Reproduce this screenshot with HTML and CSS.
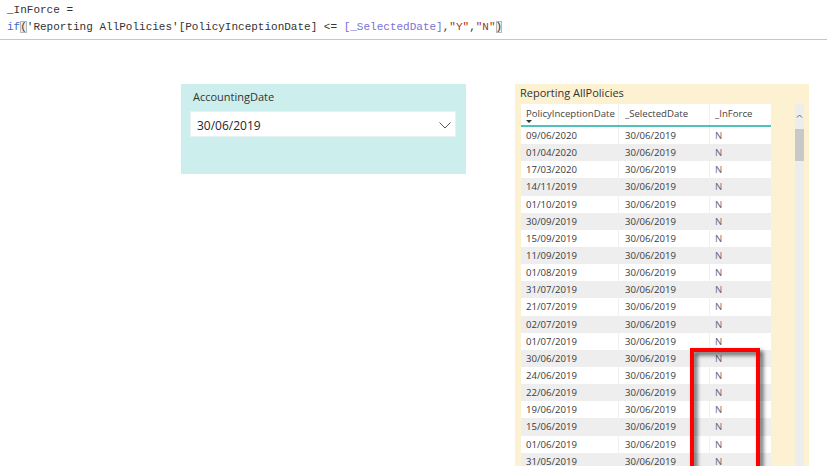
FILE: index.html
```html
<!DOCTYPE html>
<html>
<head>
<meta charset="utf-8">
<link rel="stylesheet" href="styles.css">
</head>
<body>
<div class="formula">
  <div class="fline">_InForce =</div>
  <div class="fline"><span class="kw">if</span><span class="paren">(</span>'Reporting AllPolicies'[PolicyInceptionDate] &lt;= <span class="meas">[_SelectedDate]</span>,<span class="str">"Y"</span>,<span class="str">"N"</span><span class="paren">)</span></div>
</div>
<div class="canvas">
  <div class="slicer">
    <div class="slicer-title">AccountingDate</div>
    <div class="dropdown">
      <span class="dd-value">30/06/2019</span>
      <svg class="chev" width="12" height="7" viewBox="0 0 12 7"><path d="M0.5 0.5 L6 6 L11.5 0.5" fill="none" stroke="#555" stroke-width="1"/></svg>
    </div>
  </div>
  <div class="visual">
    <div class="vtitle">Reporting AllPolicies</div>
    <div class="vbody">
      <div class="grid">
        <div class="hrow">
          <div class="hcell c1">PolicyInceptionDate<span class="sort"></span></div>
          <div class="hcell c2">_SelectedDate</div>
          <div class="hcell c3">_InForce</div>
        </div>
        <div class="row"><div class="cell c1">09/06/2020</div><div class="cell c2">30/06/2019</div><div class="cell c3">N</div></div>
        <div class="row"><div class="cell c1">01/04/2020</div><div class="cell c2">30/06/2019</div><div class="cell c3">N</div></div>
        <div class="row"><div class="cell c1">17/03/2020</div><div class="cell c2">30/06/2019</div><div class="cell c3">N</div></div>
        <div class="row"><div class="cell c1">14/11/2019</div><div class="cell c2">30/06/2019</div><div class="cell c3">N</div></div>
        <div class="row"><div class="cell c1">01/10/2019</div><div class="cell c2">30/06/2019</div><div class="cell c3">N</div></div>
        <div class="row"><div class="cell c1">30/09/2019</div><div class="cell c2">30/06/2019</div><div class="cell c3">N</div></div>
        <div class="row"><div class="cell c1">15/09/2019</div><div class="cell c2">30/06/2019</div><div class="cell c3">N</div></div>
        <div class="row"><div class="cell c1">11/09/2019</div><div class="cell c2">30/06/2019</div><div class="cell c3">N</div></div>
        <div class="row"><div class="cell c1">01/08/2019</div><div class="cell c2">30/06/2019</div><div class="cell c3">N</div></div>
        <div class="row"><div class="cell c1">31/07/2019</div><div class="cell c2">30/06/2019</div><div class="cell c3">N</div></div>
        <div class="row"><div class="cell c1">21/07/2019</div><div class="cell c2">30/06/2019</div><div class="cell c3">N</div></div>
        <div class="row"><div class="cell c1">02/07/2019</div><div class="cell c2">30/06/2019</div><div class="cell c3">N</div></div>
        <div class="row"><div class="cell c1">01/07/2019</div><div class="cell c2">30/06/2019</div><div class="cell c3">N</div></div>
        <div class="row"><div class="cell c1">30/06/2019</div><div class="cell c2">30/06/2019</div><div class="cell c3">N</div></div>
        <div class="row"><div class="cell c1">24/06/2019</div><div class="cell c2">30/06/2019</div><div class="cell c3">N</div></div>
        <div class="row"><div class="cell c1">22/06/2019</div><div class="cell c2">30/06/2019</div><div class="cell c3">N</div></div>
        <div class="row"><div class="cell c1">19/06/2019</div><div class="cell c2">30/06/2019</div><div class="cell c3">N</div></div>
        <div class="row"><div class="cell c1">15/06/2019</div><div class="cell c2">30/06/2019</div><div class="cell c3">N</div></div>
        <div class="row"><div class="cell c1">01/06/2019</div><div class="cell c2">30/06/2019</div><div class="cell c3">N</div></div>
        <div class="row"><div class="cell c1">31/05/2019</div><div class="cell c2">30/06/2019</div><div class="cell c3">N</div></div>
      </div>
      <div class="scrollbar">
        <svg class="sb-arrow" width="9" height="8" viewBox="0 0 9 8"><path d="M2 5.5 L4.5 3 L7 5.5" fill="none" stroke="#666" stroke-width="1"/></svg>
        <div class="sb-thumb"></div>
      </div>
    </div>
    <div class="highlight"></div>
  </div>
</div>
</body>
</html>
```

FILE: styles.css
```css
html, body {
  margin: 0;
  padding: 0;
  background: #ffffff;
  height: 466px;
  overflow: hidden;
}

.formula {
  height: 37px;
  padding: 2px 0 0 7px;
  border-bottom: 1px solid #c6c6c6;
  font-family: "Liberation Mono", "DejaVu Sans Mono", monospace;
  font-size: 11px;
  color: #333333;
  box-sizing: content-box;
}

.fline {
  height: 17px;
  line-height: 17px;
  white-space: pre;
}

.kw { color: #3b6ccc; }
.meas { color: #7b6fd6; }
.str { color: #a3321f; }
.paren {
  background: #ececec;
  outline: 1px solid #b8b8b8;
  outline-offset: -1px;
}

.canvas {
  display: flex;
  align-items: flex-start;
  padding: 44px 0 0 181px;
  gap: 49px;
  font-family: "Open Sans", "Noto Sans", sans-serif;
}

.slicer {
  width: 285px;
  height: 90px;
  box-sizing: border-box;
  background: #ccefed;
  padding: 6px 9px;
}

.slicer-title {
  margin: 0 0 7px 3px;
  height: 14px;
  line-height: 14px;
  font-size: 11px;
  color: #333333;
}

.dropdown {
  width: 266px;
  height: 26px;
  box-sizing: border-box;
  background: #ffffff;
  border: 1px solid #e9f2f2;
  display: flex;
  align-items: center;
  justify-content: space-between;
  padding: 2px 4px 0 6px;
}

.dd-value {
  font-size: 12px;
  color: #252525;
}

.chev { display: block; margin-top: 0; }

.visual {
  position: relative;
  width: 294px;
  height: 400px;
  background: #fcf2d2;
  overflow: hidden;
}

.vtitle {
  height: 20px;
  padding: 1px 0 0 5px;
  box-sizing: border-box;
  font-size: 11px;
  line-height: 15px;
  color: #333333;
}

.vbody {
  display: flex;
  padding-left: 6px;
  gap: 24px;
}

.grid {
  width: 250px;
  font-size: 9.6px;
  color: #3a3a3a;
}

.hrow {
  display: flex;
  height: 21px;
  background: #ffffff;
  border-bottom: 2px solid #4fc3ba;
}

.hcell {
  position: relative;
  box-sizing: border-box;
  padding-top: 3px;
  line-height: 13px;
  color: #444444;
  border-right: 1px solid #f2f2f2;
}

.sort {
  position: absolute;
  left: 5px;
  top: 16px;
  width: 0;
  height: 0;
  border-left: 3px solid transparent;
  border-right: 3px solid transparent;
  border-top: 3px solid #333333;
}

.row {
  display: flex;
  height: 17.15px;
  line-height: 17.15px;
  background: #ffffff;
}

.row:nth-child(odd) {
  background: #eeeeee;
}

.cell {
  box-sizing: border-box;
  border-right: 1px solid #f0f0f0;
  white-space: nowrap;
}

.c1 { width: 98px; padding-left: 5px; }
.c2 { width: 91px; padding-left: 6px; }
.c3 { width: 61px; padding-left: 5px; border-right: none; }
.cell.c3 { color: #666677; }

.scrollbar {
  width: 9px;
  height: 380px;
  background: #ededed;
  display: flex;
  flex-direction: column;
  padding-top: 8px;
}

.sb-arrow { display: block; }

.sb-thumb {
  margin-top: 9px;
  height: 32px;
  background: #c8c8c8;
}

.highlight {
  position: absolute;
  left: 175px;
  top: 264px;
  width: 70px;
  height: 140px;
  box-sizing: border-box;
  border: 4px solid #ff0000;
  filter: drop-shadow(3px 3px 2px rgba(0, 0, 0, 0.65));
}
```
